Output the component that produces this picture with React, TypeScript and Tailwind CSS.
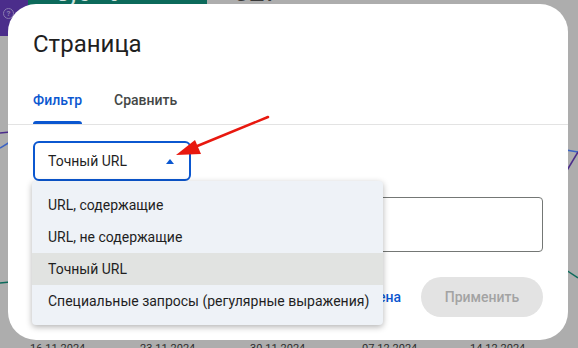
import React from "react";

const menuItems = [
  { label: "URL, содержащие", active: false },
  { label: "URL, не содержащие", active: false },
  { label: "Точный URL", active: true },
  { label: "Специальные запросы (регулярные выражения)", active: false },
];

const dates = [
  { label: "16.11.2024", x: 30 },
  { label: "23.11.2024", x: 140 },
  { label: "30.11.2024", x: 250 },
  { label: "07.12.2024", x: 362 },
  { label: "14.12.2024", x: 470 },
];

export default function App() {
  return (
    <div
      className="relative w-[578px] h-[348px] overflow-hidden bg-[#adadad]"
      style={{ fontFamily: "Roboto, 'Noto Sans', sans-serif" }}
    >
      {/* Dimmed page underneath */}
      <div className="absolute left-0 top-0 w-[28px] h-[36px] bg-[#4b2d8b]">
        <div className="absolute left-[3px] top-[8px] w-[11px] h-[11px] rounded-full border border-[#8a7bb0] text-[8px] leading-[9px] text-center text-[#8a7bb0] font-bold">
          ?
        </div>
      </div>
      <div className="absolute left-[28px] top-0 w-[179px] h-[8px] bg-[#0c6a5b]" />
      <div className="absolute left-[55px] top-[-22px] text-[28px] text-[#cfe3de] leading-[28px]">3,6 %</div>
      <div className="absolute left-[233px] top-[-22px] text-[28px] text-[#3a3a3a] leading-[28px]">527</div>
      <svg className="absolute left-0 top-0" width="578" height="348">
        <path d="M0 133 L10 132" stroke="#4b2d8b" strokeWidth="1.5" fill="none" />
        <path d="M0 148 L10 142" stroke="#3b63c4" strokeWidth="1.5" fill="none" />
        <path d="M0 283 L10 282" stroke="#0c6a5b" strokeWidth="1.5" fill="none" />
        <path d="M566 150 L578 152" stroke="#3b63c4" strokeWidth="1.5" fill="none" />
        <path d="M566 172 L578 152" stroke="#4b2d8b" strokeWidth="1.5" fill="none" />
        <path d="M566 270 L578 278" stroke="#0c6a5b" strokeWidth="1.5" fill="none" />
      </svg>
      {dates.map((d) => (
        <div
          key={d.label}
          className="absolute top-[342px] text-[11px] leading-[13px] text-[#2e2e2e]"
          style={{ left: d.x }}
        >
          {d.label}
        </div>
      ))}

      {/* Dialog */}
      <div className="absolute left-[8px] top-[4px] w-[560px] h-[336px] bg-white rounded-[28px] flex flex-col">
        <div className="pt-[24px] px-[25px] text-[24px] leading-[32px] text-[#1f1f1f]">Страница</div>
        <div className="mt-[16px] flex border-b border-[#e3e3e3] px-[25px] gap-[32px] h-[49px]">
          <div className="relative flex items-center text-[14px] font-medium text-[#0b57d0]">
            Фильтр
            <div className="absolute left-0 right-0 bottom-0 h-[3px] rounded-t-[3px] bg-[#0b57d0]" />
          </div>
          <div className="flex items-center text-[14px] font-medium text-[#444746]">Сравнить</div>
        </div>

        <div className="px-[25px] pt-[16px] flex flex-col">
          <div className="w-[158px] h-[40px] rounded-[6px] border-2 border-[#0b57d0] flex items-center justify-between pl-[13px] pr-[15px]">
            <span className="text-[14px] text-[#1f1f1f]">Точный URL</span>
            <svg width="8" height="5" viewBox="0 0 8 5">
              <path d="M0 5 L4 0 L8 5 Z" fill="#0b57d0" />
            </svg>
          </div>
          <div className="mt-[16px] w-[510px] h-[55px] rounded-[4px] border border-[#747775]" />
          <div className="mt-[25px] flex justify-end items-center gap-[8px] w-[510px]">
            <button className="h-[40px] px-[12px] text-[14px] font-medium text-[#0b57d0]">Отмена</button>
            <button className="h-[40px] w-[122px] rounded-full bg-[#e3e3e3] text-[14px] font-medium text-[#a3a3a3]">
              Применить
            </button>
          </div>
        </div>
      </div>

      {/* Dropdown menu */}
      <div className="absolute left-[32px] top-[181px] w-[351px] py-[8px] rounded-[4px] bg-[#eef2f7] shadow-[0_2px_6px_rgba(0,0,0,0.3)]">
        {menuItems.map((item) => (
          <div
            key={item.label}
            className={`h-[32px] flex items-center pl-[16px] text-[14px] text-[#1f1f1f] ${
              item.active ? "bg-[#e1e3e1]" : ""
            }`}
          >
            {item.label}
          </div>
        ))}
      </div>

      {/* Red arrow annotation */}
      <svg className="absolute left-0 top-0 pointer-events-none" width="578" height="348">
        <line x1="268" y1="117" x2="190" y2="149" stroke="#e8180f" strokeWidth="2.5" strokeLinecap="round" />
        <path d="M176 155 L195 140 L201 154 Z" fill="#e8180f" />
      </svg>
    </div>
  );
}
